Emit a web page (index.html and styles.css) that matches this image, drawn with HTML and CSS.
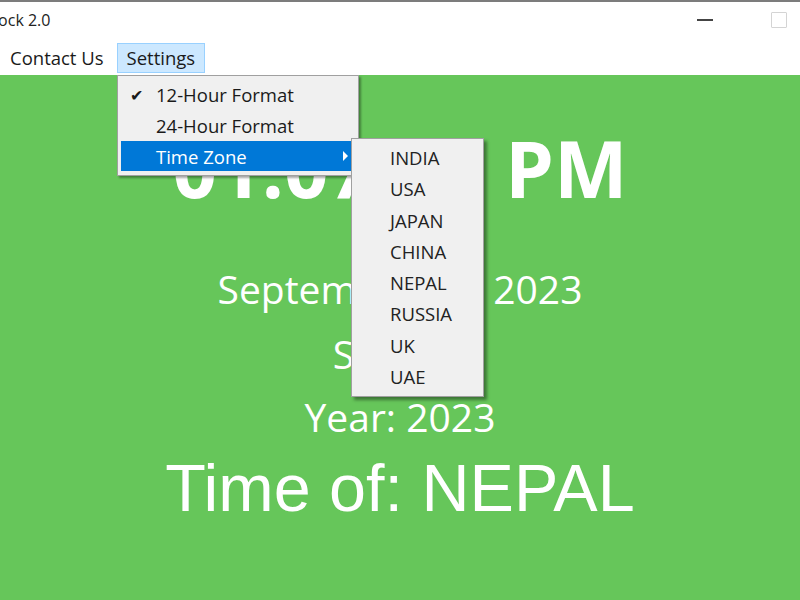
FILE: index.html
```html
<!DOCTYPE html>
<html lang="en">
<head>
    <meta charset="UTF-8">
    <meta name="viewport" content="width=device-width, initial-scale=1.0">
    <title>Clock 2.0</title>
    <link rel="stylesheet" href="styles.css">
</head>
<body>
    <div class="window">
        <div class="title-bar">
            <span class="title">Clock 2.0</span>
            <div class="controls">
                <span class="ctl ctl-min"></span>
                <span class="ctl ctl-max"></span>
            </div>
        </div>

        <div class="menu-bar">
            <span class="menu-item">Contact Us</span>
            <span class="menu-item active">Settings</span>

            <div class="dropdown">
                <div class="drop-item"><span class="check">&#10004;</span>12-Hour Format</div>
                <div class="drop-item"><span class="check"></span>24-Hour Format</div>
                <div class="drop-item selected"><span class="check"></span>Time Zone<span class="arrow"></span></div>
            </div>

            <div class="submenu">
                <div class="sub-item">INDIA</div>
                <div class="sub-item">USA</div>
                <div class="sub-item">JAPAN</div>
                <div class="sub-item">CHINA</div>
                <div class="sub-item">NEPAL</div>
                <div class="sub-item">RUSSIA</div>
                <div class="sub-item">UK</div>
                <div class="sub-item">UAE</div>
            </div>
        </div>

        <main class="clock">
            <div class="time">01:07:17 PM</div>
            <div class="date">September 17, 2023</div>
            <div class="day">Sunday</div>
            <div class="year">Year: 2023</div>
            <div class="zone">Time of: NEPAL</div>
        </main>
    </div>
</body>
</html>
```

FILE: styles.css
```css
:root {
    --green: #66c65a;
    --menu-bg: #f0f0f0;
    --menu-border: #a0a0a0;
    --select-blue: #0078d7;
    --hover-blue: #cce8ff;
    --hover-border: #99d1ff;
    --text: #1a1a1a;
}

body {
    margin: 0;
    padding: 0;
    width: 800px;
    height: 600px;
    overflow: hidden;
    font-family: "Open Sans", "Noto Sans", sans-serif;
    color: var(--text);
}

.window {
    display: flex;
    flex-direction: column;
    height: 600px;
}

.title-bar {
    height: 36px;
    border-top: 2px solid #7c7c7c;
    background: white;
    display: flex;
    align-items: center;
    justify-content: space-between;
}

.title {
    font-size: 16px;
    margin-left: -16px;
    color: #222;
}

.controls {
    display: flex;
    align-items: center;
    gap: 58px;
    margin-right: 13px;
}

.ctl-min {
    display: block;
    width: 16px;
    height: 2px;
    background: #444;
}

.ctl-max {
    display: block;
    width: 14px;
    height: 14px;
    border: 1px solid #d4d4d4;
    border-radius: 1px;
}

.menu-bar {
    position: relative;
    height: 37px;
    background: white;
    display: flex;
    align-items: center;
    gap: 3px;
    padding-left: 0;
    font-size: 18.5px;
}

.menu-item {
    padding: 2px 9px 2px;
    border: 1px solid transparent;
    line-height: 24px;
    margin-top: 3px;
}

.menu-item.active {
    background: var(--hover-blue);
    border-color: var(--hover-border);
}

.dropdown {
    position: absolute;
    left: 117px;
    top: 37px;
    width: 234px;
    padding: 3px 3px 4px;
    background: var(--menu-bg);
    border: 1px solid var(--menu-border);
    box-shadow: 2px 2px 2px rgba(0, 0, 0, 0.35);
    z-index: 5;
}

.drop-item {
    position: relative;
    display: flex;
    align-items: center;
    height: 31px;
    font-size: 18.5px;
}

.drop-item.selected {
    background: var(--select-blue);
    color: white;
    height: 30px;
}

.check {
    width: 35px;
    padding-left: 9px;
    box-sizing: border-box;
    font-size: 16px;
}

.arrow {
    position: absolute;
    right: 7px;
    top: 10px;
    border-left: 5px solid white;
    border-top: 5px solid transparent;
    border-bottom: 5px solid transparent;
}

.submenu {
    position: absolute;
    left: 351px;
    top: 100px;
    width: 131px;
    padding: 3px 0 4px;
    background: var(--menu-bg);
    border: 1px solid var(--menu-border);
    box-shadow: 3px 3px 3px rgba(0, 0, 0, 0.4);
    z-index: 6;
}

.sub-item {
    height: 31.3px;
    line-height: 31px;
    padding-left: 38px;
    font-size: 18.5px;
    color: #222;
}

.clock {
    flex: 1;
    background: var(--green);
    color: white;
    display: flex;
    flex-direction: column;
    align-items: center;
}

.time {
    font-weight: 700;
    font-size: 78px;
    line-height: 90px;
    margin-top: 48px;
}

.date {
    font-size: 39px;
    line-height: 50px;
    margin-top: 51px;
}

.day {
    font-size: 39px;
    line-height: 50px;
    margin-top: 15px;
}

.year {
    font-size: 39px;
    line-height: 50px;
    margin-top: 13px;
}

.zone {
    font-family: "Liberation Sans", Arial, sans-serif;
    font-size: 66.5px;
    line-height: 76px;
    margin-top: 8px;
}
```
